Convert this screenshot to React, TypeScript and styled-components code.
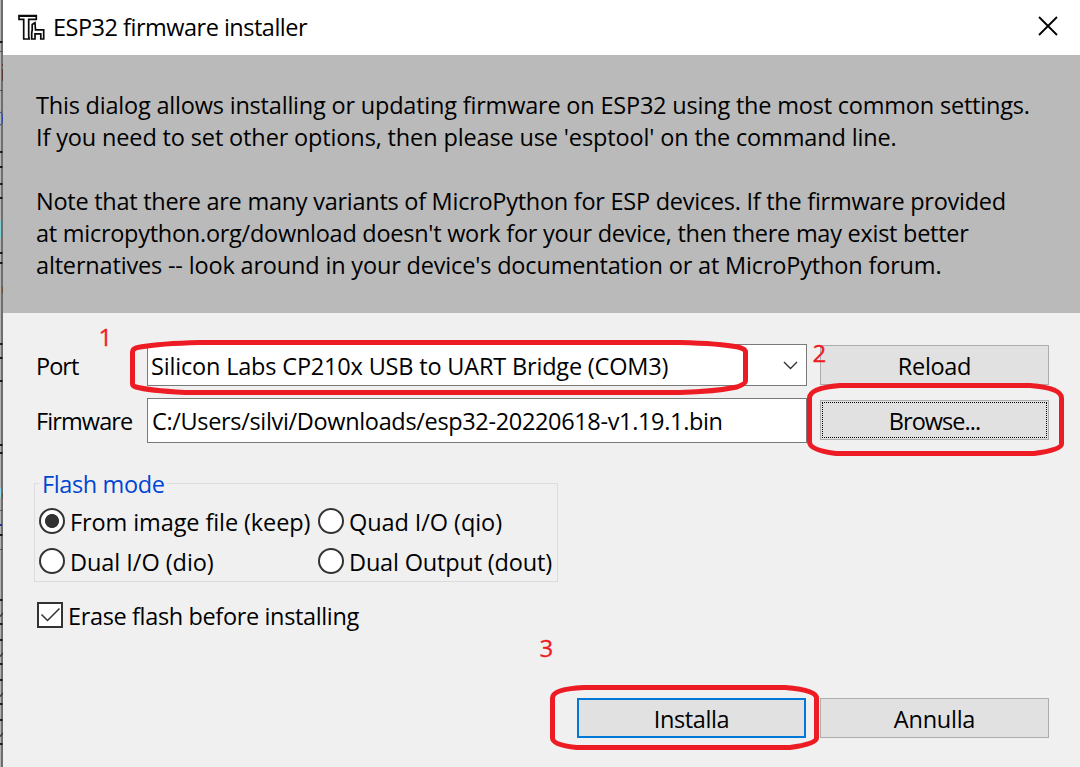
import React from 'react';
import styled, { createGlobalStyle } from 'styled-components';

const Global = createGlobalStyle`
  * { box-sizing: border-box; }
  html, body { margin: 0; padding: 0; background: #f0f0f0; overflow: hidden; }
  body { font-family: "Open Sans", "Noto Sans", sans-serif; font-size: 23.5px; line-height: 32px; color: #000; }
`;

const Screen = styled.div`
  position: relative;
  display: flex;
  width: 1080px;
  height: 767px;
  overflow: hidden;
`;

const Edge = styled.div`
  width: 3px;
  flex: none;
  background: linear-gradient(to right, #b4b4b4 0 1px, #6e6e6e 1px 3px);
`;

const EdgeArt = styled.svg`
  display: block;
`;

const Dialog = styled.div`
  flex: 1;
  min-width: 0;
  display: flex;
  flex-direction: column;
  background: #f0f0f0;
`;

const TitleBar = styled.header`
  display: flex;
  align-items: center;
  height: 55px;
  flex: none;
  padding: 0 22px 0 15px;
  background: #fff;
`;

const Title = styled.h1`
  margin: 0 0 2px;
  font: inherit;
`;

const AppIcon = styled.svg`
  width: 27px;
  height: 27px;
  margin-right: 8px;
`;

const CloseIcon = styled.svg`
  width: 20px;
  height: 20px;
  margin: 0 0 3px auto;
`;

const Text = styled.span<{ $ls?: number }>`
  white-space: pre;
  letter-spacing: ${(p) => p.$ls ?? 0}px;
`;

const Notice = styled.section`
  display: flex;
  flex-direction: column;
  align-items: flex-start;
  flex: none;
  height: 258px;
  padding: 34px 0 0 33px;
  background: #bababa;
`;

const Paragraph = styled.div`
  display: flex;
  flex-direction: column;
  align-items: flex-start;
  margin-bottom: 32px;
`;

const Form = styled.section`
  display: grid;
  grid-template-columns: 111px 660px 229px;
  grid-template-rows: 42px 45px;
  row-gap: 12px;
  padding: 31px 0 0 33px;
`;

const Label = styled.label`
  align-self: center;
  padding-top: 1px;
`;

const Field = styled.div<{ $left: number }>`
  display: flex;
  align-items: center;
  justify-content: space-between;
  border: 1px solid #7a7a7a;
  background: #fff;
  padding: 1px 8px 0 ${(p) => p.$left}px;
`;

const Chevron = styled.svg`
  width: 15px;
  height: 9px;
`;

const Button = styled.button<{ $primary?: boolean; $focus?: boolean }>`
  width: 229px;
  height: 40px;
  padding: 2px 0 0;
  border: ${(p) => (p.$primary ? '2px solid #0078d7' : '1px solid #adadad')};
  background: #e1e1e1;
  color: #000;
  font: inherit;
  line-height: 32px;
  outline: ${(p) => (p.$focus ? '1px dotted #000' : 'none')};
  outline-offset: -3px;
`;

const ButtonCell = styled.div<{ $top: number }>`
  padding: ${(p) => p.$top}px 0 0 13px;
  width: 242px;
`;

const FlashMode = styled.fieldset`
  display: grid;
  grid-template-columns: 279px 1fr;
  grid-auto-rows: 40px;
  align-content: start;
  width: 524px;
  height: 115px;
  margin: 24px 0 0 31px;
  padding: 1px 0 0 4px;
  border: 1px solid #dcdcdc;
`;

const Legend = styled.legend`
  height: 33px;
  padding: 1px 1px 0 3px;
  color: #0046d5;
`;

const Option = styled.label`
  display: flex;
  align-items: center;
  gap: 5px;
  padding-top: 1px;
`;

const Radio = styled.span<{ $on?: boolean }>`
  width: 26px;
  height: 26px;
  flex: none;
  margin-bottom: 2px;
  border: 2px solid #333;
  border-radius: 50%;
  background: ${(p) => (p.$on ? 'radial-gradient(circle, #333 0 6.6px, #fff 7.4px)' : '#fff')};
`;

const EraseRow = styled.label`
  display: flex;
  align-items: center;
  gap: 5px;
  height: 32px;
  margin: 18px 0 0 34px;
`;

const CheckBox = styled.svg`
  width: 26px;
  height: 26px;
  margin-bottom: 3px;
`;

const Actions = styled.footer`
  display: flex;
  gap: 14px;
  margin: auto 0 29px 574px;
`;

const Marks = styled.svg`
  position: absolute;
  inset: 0;
  pointer-events: none;
`;

const StepNumber = styled.span<{ $x: number; $y: number }>`
  position: absolute;
  left: ${(p) => p.$x}px;
  top: ${(p) => p.$y}px;
  color: #ed1c24;
  font-size: 24px;
  -webkit-text-stroke: 0.3px #ed1c24;
`;

const darkMarks = [42, 152, 167, 184, 198, 253, 263, 344, 358, 381, 445, 453, 535, 600, 624, 640, 664, 680, 704, 720, 744];
const tickMarks = [615, 655, 695, 735];
const ruleMarks = [51, 90, 510, 549];

export default function App() {
  return (
    <>
      <Global />
      <Screen>
        <Edge>
          <EdgeArt width="3" height="767" viewBox="0 0 3 767">
            {ruleMarks.map((y) => <rect key={y} x="0" y={y} width="3" height="1" fill="#555" />)}
            {darkMarks.map((y) => <rect key={y} x="0" y={y - 1} width="2.500" height="2" fill="#1c1c1c" />)}
            {tickMarks.map((y) => <path key={y} d={`M0 ${y + 1.500}L3 ${y - 2}`} stroke="#333" strokeWidth="1.200" />)}
            <path d="M2.500 64v2M2.500 69v12" stroke="#5a3a30" />
            <path d="M0 112Q2.500 113 2.500 119T0 125" fill="none" stroke="#2a48b0" />
            <rect x="0" y="220" width="1" height="18" fill="#80d0d0" />
            <path d="M2.500 287v6M2.500 493v6" stroke="#70502a" />
            <rect x="0" y="488" width="1" height="10" fill="#90d8f0" />
            <rect x="0" y="524" width="2" height="2" fill="#2030a0" />
          </EdgeArt>
        </Edge>
        <Dialog>
          <TitleBar>
            <AppIcon viewBox="0 0 27 27" fill="#fff" stroke="#0a0a0a" strokeWidth="1.7">
              <path d="M1 1.700H18.300V5.300H10.700V22.500L11.200 25H5.700V5.300H1z" />
              <path d="M1 2H18.300" strokeWidth="2" />
              <path d="M13.700 25V19L14.200 16V10.500L17 8.800L17.500 15.800H25.700V25H22.800V19.800H17V25z" />
            </AppIcon>
            <Title><Text $ls={-0.5}>ESP32 firmware installer</Text></Title>
            <CloseIcon viewBox="0 0 20 20" stroke="#000" strokeWidth="1.8">
              <path d="M1 1l18 18M19 1L1 19" />
            </CloseIcon>
          </TitleBar>
          <Notice>
            <Paragraph>
              <Text $ls={-0.2}>This dialog allows installing or updating firmware on ESP32 using the most common settings.</Text>
              <Text $ls={-0.14}>If you need to set other options, then please use 'esptool' on the command line.</Text>
            </Paragraph>
            <Paragraph>
              <Text $ls={-0.265}>Note that there are many variants of MicroPython for ESP devices. If the firmware provided</Text>
              <Text $ls={-0.265}>at micropython.org/download doesn't work for your device, then there may exist better</Text>
              <Text $ls={-0.17}>alternatives -- look around in your device's documentation or at MicroPython forum.</Text>
            </Paragraph>
          </Notice>
          <Form>
            <Label><Text $ls={-1}>Port</Text></Label>
            <Field $left={3}>
              <Text $ls={-0.18}>Silicon Labs CP210x USB to UART Bridge (COM3)</Text>
              <Chevron viewBox="0 0 15 9" fill="none" stroke="#333" strokeWidth="1.4">
                <path d="M1 1l6.500 6.500L14 1" />
              </Chevron>
            </Field>
            <ButtonCell $top={1}><Button><Text $ls={-0.3}>Reload</Text></Button></ButtonCell>
            <Label><Text $ls={-0.9}>Firmware</Text></Label>
            <Field $left={4}>
              <Text $ls={-0.34}>C:/Users/silvi/Downloads/esp32-20220618-v1.19.1.bin</Text>
            </Field>
            <ButtonCell $top={2}><Button $focus><Text $ls={-0.95}>Browse...</Text></Button></ButtonCell>
          </Form>
          <FlashMode>
            <Legend><Text $ls={-0.38}>Flash mode</Text></Legend>
            <Option><Radio $on /><Text $ls={-0.1}>From image file (keep)</Text></Option>
            <Option><Radio /><Text $ls={-0.08}>Quad I/O (qio)</Text></Option>
            <Option><Radio /><Text $ls={-0.05}>Dual I/O (dio)</Text></Option>
            <Option><Radio /><Text $ls={-0.17}>Dual Output (dout)</Text></Option>
          </FlashMode>
          <EraseRow>
            <CheckBox viewBox="0 0 26 26">
              <rect x="1" y="1" width="24" height="24" fill="#fff" stroke="#333" strokeWidth="2" />
              <path d="M4.500 12.500l6 6L22.500 6.500" fill="none" stroke="#333" strokeWidth="1.5" />
            </CheckBox>
            <Text $ls={-0.36}>Erase flash before installing</Text>
          </EraseRow>
          <Actions>
            <Button $primary><Text $ls={-0.4}>Installa</Text></Button>
            <Button><Text $ls={-0.25}>Annulla</Text></Button>
          </Actions>
        </Dialog>
        <Marks width="1080" height="767" viewBox="0 0 1080 767" fill="none" stroke="#ed1c24" strokeWidth="5" strokeLinejoin="round">
          <path d="M200 342.500H680Q720 343.500 738 347Q745.500 349 745.500 352V381Q745.500 384 737 387Q715 391.500 680 392.500H185Q148 390.500 136 387Q132.500 386 132.500 384V352Q132.500 348 140 347Q160 343.500 200 342.500Z" />
          <path d="M840 385.500H1030Q1061.500 388 1061.500 398V444Q1061.500 450 1034 453.500H836Q809.500 450 809.500 442V398Q809.500 388 840 385.500Z" />
          <path d="M584 687.500H785Q816.500 690 816.500 698V738Q816.500 744 790 747.500H577Q552.500 745 552.500 738V698Q552.500 689 584 687.500Z" />
        </Marks>
        <StepNumber $x={98.5} $y={321}>1</StepNumber>
        <StepNumber $x={812.5} $y={337}>2</StepNumber>
        <StepNumber $x={539.5} $y={632}>3</StepNumber>
      </Screen>
    </>
  );
}
